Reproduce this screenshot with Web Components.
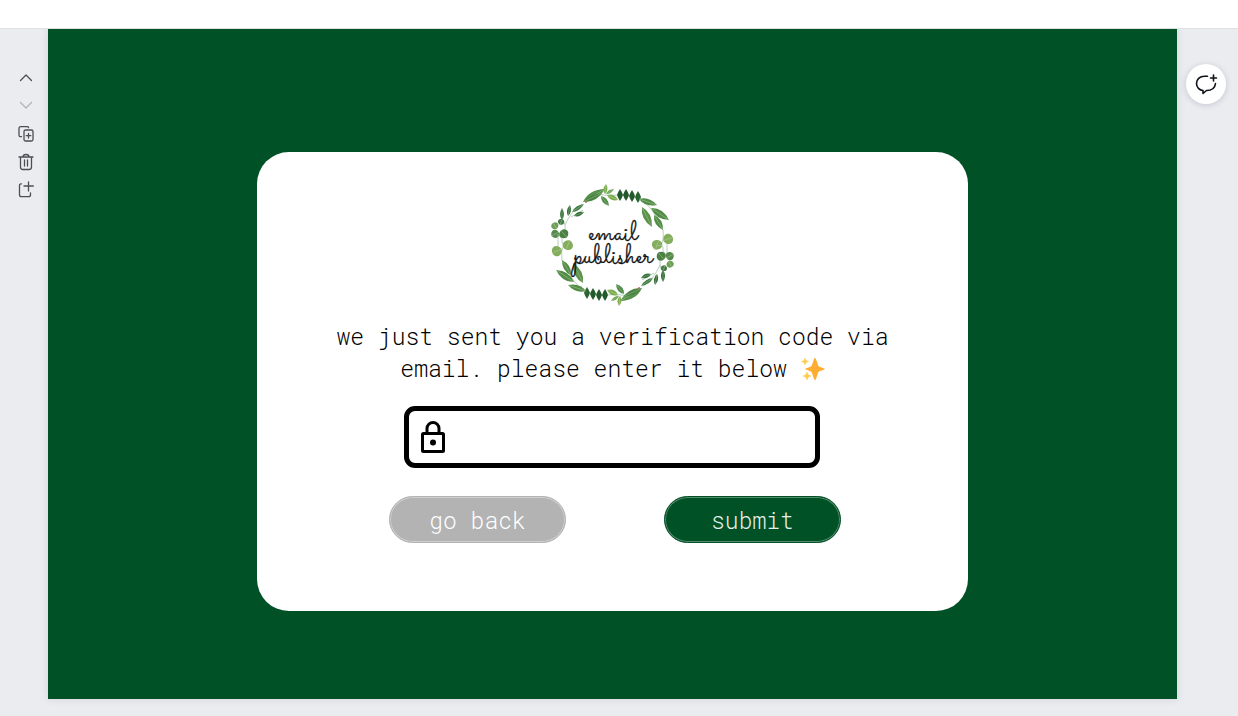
<!DOCTYPE html>
<html lang="en">
<head>
<meta charset="utf-8">
<meta name="viewport" content="width=device-width, initial-scale=1">
<title>email publisher</title>
<style>
  body { margin: 0; font-family: "Roboto Mono", "Liberation Mono", monospace; color: #000; }
</style>
</head>
<body>
<design-editor>
  <page-tools slot="left"></page-tools>
  <verify-card>
    <brand-logo slot="logo"></brand-logo>
    we just sent you a verification code via email. please enter it below <sparkle-icon></sparkle-icon>
    <code-field slot="field"></code-field>
    <pill-button slot="actions">go back</pill-button>
    <pill-button slot="actions" primary>submit</pill-button>
  </verify-card>
  <comment-button slot="right"></comment-button>
</design-editor>

<script>
function define(name, html) {
  customElements.define(name, class extends HTMLElement {
    constructor() {
      super();
      const template = document.createElement('template');
      template.innerHTML = html;
      this.attachShadow({ mode: 'open' }).append(template.content.cloneNode(true));
    }
  });
}

define('design-editor', `
  <style>
    :host { display: flex; flex-direction: column; min-height: 100vh; background: #ebecf0; }
    header { height: 28px; background: #fff; border-bottom: 1px solid #dfe0e4; }
    .work { flex: 1; display: grid; grid-template-columns: 48px 1fr 61px; padding-bottom: 17px; }
    main { display: flex; justify-content: center; align-items: flex-start; padding: 123px 0 87px;
           background: #005126; box-shadow: 0 0 8px rgba(40, 50, 70, .12); clip-path: inset(0 -12px -12px); }
    aside { padding-top: 35px; }
  </style>
  <header></header>
  <div class="work">
    <aside><slot name="left"></slot></aside>
    <main><slot></slot></main>
    <aside><slot name="right"></slot></aside>
  </div>`);

define('page-tools', `
  <style>
    :host { display: flex; flex-direction: column; align-items: center; padding-left: 4px; }
    button { width: 28px; height: 28px; padding: 0; border: 0; background: none; color: #4b4e55; }
    button:disabled { color: #b1b3b9; }
    svg { display: block; margin: auto; fill: none; stroke: currentColor; stroke-width: 1.3;
          stroke-linecap: round; stroke-linejoin: round; }
  </style>
  <button aria-label="Previous page"><svg width="18" height="18"><path d="M3.5 11.5 9 6l5.500 5.500"/></svg></button>
  <button aria-label="Next page" disabled><svg width="18" height="18"><path d="M3.500 5.500 9 11l5.500-5.500"/></svg></button>
  <button aria-label="Duplicate page"><svg width="18" height="18"><path d="M4.500 11.700H3.500a1.500 1.500 0 0 1-1.500-1.500V3.200a1.500 1.500 0 0 1 1.500-1.500h6.700a1.500 1.500 0 0 1 1.400 1"/><rect x="7" y="5" width="9" height="11" rx="1.500"/><path d="M11.500 8.500v4.500M9.200 10.700h4.600"/></svg></button>
  <button aria-label="Delete page"><svg width="18" height="18"><path d="M2 4h14M6 4C6 2.200 7 1.500 9 1.500s3 .7 3 2.500M3.500 4v10a2.500 2.500 0 0 0 2.500 2.500h6a2.500 2.500 0 0 0 2.500-2.500V4M7.500 7v6M10.500 7v6"/></svg></button>
  <button aria-label="Add page"><svg width="18" height="18"><path d="M4.500 2.800H4A1.500 1.500 0 0 0 2.500 4.300v9.400a2 2 0 0 0 2 2h7a2 2 0 0 0 2-2V12M11.500 .800v9.200M7 5h9.300"/></svg></button>`);

define('comment-button', `
  <style>
    :host { display: block; padding-left: 9px; }
    button { display: grid; place-items: center; width: 40px; height: 40px; padding: 0; border: 0;
             border-radius: 50%; background: #fff; color: #0e1318; box-shadow: 0 1px 6px rgba(40, 50, 80, .2); }
    svg { fill: none; stroke: currentColor; stroke-width: 1.6; stroke-linecap: round; stroke-linejoin: round; }
  </style>
  <button aria-label="Add comment"><svg width="24" height="24"><path d="M13.500 4.200H10.500C5.500 4.200 2.500 7.500 2.500 11.500c0 4 3 6.700 6.500 7V21.500l3.500-3c5 0 8.500-2.500 9-7M19.500 3v6M16.500 6h6"/></svg></button>`);

define('verify-card', `
  <style>
    :host { display: flex; flex-direction: column; align-items: center; box-sizing: border-box; width: 63%;
            min-width: 480px; padding: 32px 24px 68px; border-radius: 32px; background: #fff; }
    p { max-width: 576px; margin: 13px 0 22px; font-size: 23px; font-weight: 300; line-height: 32px; text-align: center; }
    .actions { display: flex; gap: 98px; margin-top: 28px; padding-left: 5px; }
  </style>
  <slot name="logo"></slot>
  <p><slot></slot></p>
  <slot name="field"></slot>
  <div class="actions"><slot name="actions"></slot></div>`);

define('sparkle-icon', `
  <style>
    :host { display: inline-block; width: 24px; height: 24px; vertical-align: -4px; }
    svg { display: block; }
  </style>
  <svg width="24" height="24" viewBox="0 0 24 24" role="img" aria-label="sparkles">
    <path fill="#ffac33" d="M14 1q.6 0 .9.800l2.300 6.600q.4 1 1.400 1.400l4.700 1.700q1 .5 0 1l-4.700 1.700q-1 .4-1.400 1.400l-2.300 6.600q-.9 1.400-1.800 0l-2.300-6.600q-.4-1-1.400-1.400l-4.700-1.700q-1-.5 0-1l4.700-1.700q1-.4 1.400-1.400l2.300-6.600Q13.400 1 14 1z"/>
    <path fill="#ffcc4d" d="m4 1 1 2.500L7.500 4.500 5 5.500 4 8 3 5.500.5 4.500 3 3.500zM6 15l1.200 2.800L10 19l-2.800 1.200L6 23l-1.200-2.800L2 19l2.800-1.200z" stroke="#ffcc4d" stroke-width=".5" stroke-linejoin="round"/>
  </svg>`);

define('code-field', `
  <style>
    :host { display: block; box-sizing: border-box; width: 416px; max-width: 100%; }
    label { display: flex; align-items: center; gap: 12px; height: 52px; padding: 0 12px;
            border: 5px solid #000; border-radius: 11px; }
    input { flex: 1; min-width: 0; height: 32px; padding: 0; border: 0; outline: 0; background: none; font: 300 23px "Roboto Mono", "Liberation Mono", monospace; }
  </style>
  <label>
    <svg width="24" height="32" fill="none" stroke="#000" stroke-width="3"><path d="M6 12V7.500a6 6 0 0 1 12 0V12"/><rect x="1.500" y="12.500" width="21" height="18" rx="1"/><circle cx="12" cy="21.500" r="3" fill="#000" stroke="none"/></svg>
    <input type="text" aria-label="verification code" autocomplete="one-time-code">
  </label>`);

define('pill-button', `
  <style>
    :host { display: block; --pill: #b3b3b3; --line: #cfcfcf; --ink: #fff; }
    :host([primary]) { --pill: #005126; --line: #568b6c; --ink: #e6efe9; }
    button { width: 177px; height: 47px; padding: 1px 0 0; border: 1px solid var(--pill); border-radius: 24px;
             background: var(--pill); box-shadow: inset 0 0 0 1px var(--line); color: var(--ink);
             font: 300 23px/32px "Roboto Mono", "Liberation Mono", monospace; }
  </style>
  <button type="button"><slot></slot></button>`);

/* A pointed leaf from its base (x1, y1) to its tip (x2, y2), with a pale midrib. */
function leaf(x1, y1, x2, y2, width, color) {
  const dx = x2 - x1, dy = y2 - y1, length = Math.hypot(dx, dy);
  const nx = -dy / length * width, ny = dx / length * width;
  const mx = x1 + dx * .45, my = y1 + dy * .45;
  return `<path fill="${color}" d="M${x1} ${y1}Q${mx + nx} ${my + ny} ${x2} ${y2}Q${mx - nx} ${my - ny} ${x1} ${y1}"/>` +
    `<path class="vein" d="M${x1} ${y1}L${x2} ${y2}"/>`;
}
function diamond(x, y, color) {
  return `<path fill="${color}" d="M${x} ${y - 6}Q${x + 2} ${y - 3} ${x + 3} ${y}Q${x + 2} ${y + 3} ${x} ${y + 6}Q${x - 2} ${y + 3} ${x - 3} ${y}Q${x - 2} ${y - 3} ${x} ${y - 6}"/>`;
}
/* A rounded eucalyptus leaf, slightly wider than tall, turned by the given angle. */
function round(x, y, r, color, turn) {
  return `<g transform="translate(${x} ${y}) rotate(${turn})"><path fill="${color}" d="M0 ${-r}C${r * 1.3} ${-r} ${r * 1.5} ${r * .6} 0 ${r}C${-r * 1.5} ${r * .6} ${-r * 1.300} ${-r} 0 ${-r}"/>` +
    `<path class="vein" d="M0 ${-r + 1}V${r}"/></g>`;
}
const sprigs = [
  '<path class="stem" d="M31 20Q20 27 14 41V50M11 33L14 41M32 26L20 33M46 10Q62 13 70 10L90 15Q104 26 112 46Q114 62 106 62M116 56V72M4 46L11 55Q10 63 17 60"/>',
  leaf(32, 18, 54, 5, 8, '#57914c'), leaf(32, 18, 51, 9, 4, '#457f3f'),
  leaf(54, 10, 55, 0, 4, '#7cae50'), leaf(55, 10, 63, 5, 3, '#68a04b'), leaf(56, 11, 67, 16, 5, '#7cae50'), leaf(50, 12, 58, 22, 5, '#4e8b48'),
  diamond(69, 11, '#235a2c'), diamond(75, 11, '#235a2c'), diamond(81, 12, '#235a2c'), diamond(87, 13, '#2a6432'),
  leaf(88, 15, 106, 21, 6, '#528d47'), leaf(100, 24, 118, 36, 7, '#528d47'),
  leaf(91, 23, 101, 43, 7, '#5d9249'), leaf(103, 31, 112, 46, 6, '#528d47'),
  leaf(11, 36, 11, 24, 4, '#2f6f37'), leaf(17, 32, 19, 21, 4, '#2f6f37'),
  leaf(21, 28, 33, 20, 4, '#427c44'), leaf(23, 32, 33, 28, 4, '#2f6f37'),
  round(10, 38, 3, '#447a44', 20), round(4, 42, 3.500, '#6e9f56', -30), round(4, 50, 4, '#548a4a', 60), round(13, 50, 4.500, '#4a8143', -40),
  round(117, 55, 5, '#84ae5c', 70), round(106, 61, 5, '#84ae5c', 20),
  '<circle cx="35" cy="18" r="1" fill="#b96f58"/>'
].join('');

define('brand-logo', `
  <style>
    :host { display: block; width: 123px; height: 123px; }
    svg { display: block; overflow: visible; }
    .stem { fill: none; stroke: #a5c4ad; stroke-width: .8; }
    .vein { fill: none; stroke: #c5d6b6; stroke-width: .4; }
    text { font: 400 29px Sacramento, "Dancing Script", Lato, cursive; text-anchor: middle; fill: #111;
           stroke: #111; stroke-width: .3; }
  </style>
  <svg width="123" height="123" viewBox="0 0 123 123" role="img" aria-label="email publisher">
    <g>${sprigs}</g>
    <g transform="rotate(180 61.5 61)">${sprigs}</g>
    <text x="62" y="56">email</text>
    <text x="62" y="79">publisher</text>
  </svg>`);
</script>
</body>
</html>
